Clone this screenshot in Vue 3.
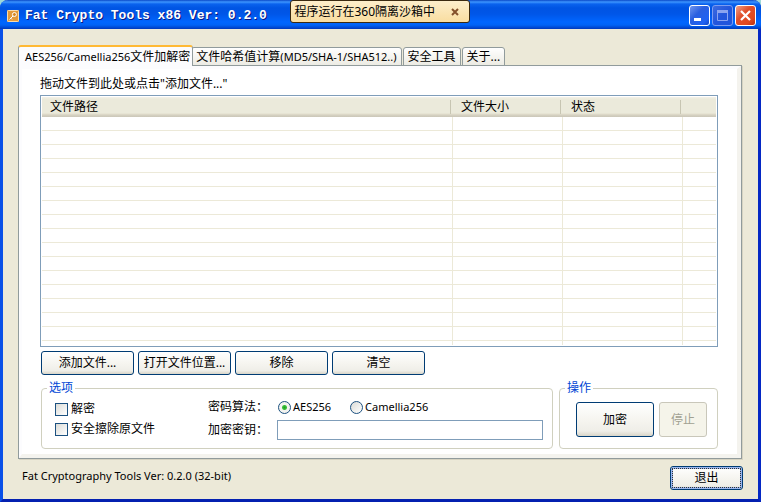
<script setup>
import { ref } from 'vue'

const tabs = [
  { latin: 'AES256/Camellia256', text: '文件加解密' },
  { text: '文件哈希值计算', tail: '(MD5/SHA-1/SHA512..)' },
  { text: '安全工具' },
  { text: '关于...' },
]
const activeTab = ref(0)

const columns = ['文件路径', '文件大小', '状态', '']
const rowCount = 17

const fileActions = ['添加文件...', '打开文件位置...', '移除', '清空']

const decrypt = ref(false)
const wipe = ref(false)
const algorithm = ref('AES256')
const secret = ref('')
const noticeOpen = ref(true)
</script>

<template>
  <div class="window">
    <header class="titlebar">
      <svg class="app-icon" viewBox="0 0 12 12" aria-hidden="true">
        <rect width="12" height="12" rx="1" fill="#e39a3c" />
        <rect x="0.5" y="0.5" width="11" height="11" rx="1" fill="none" stroke="#f9dcae" />
        <circle cx="7.4" cy="4.5" r="2" fill="#d98722" stroke="#fff" />
        <path d="M6 6 L2.5 9.5 M3.8 8.2 L5 9.4" stroke="#fff" fill="none" />
      </svg>
      <h1>Fat Crypto Tools x86 Ver: 0.2.0</h1>
      <div class="window-buttons">
        <button class="win-btn" aria-label="最小化">
          <svg viewBox="0 0 19 19"><rect x="4" y="12" width="7" height="3" fill="#fff" /></svg>
        </button>
        <button class="win-btn dim" aria-label="最大化" disabled>
          <svg viewBox="0 0 19 19">
            <path d="M4.5 4.5h10v10h-10z" fill="none" stroke="#8ba4f0" />
            <path d="M4 4h11v3H4z" fill="#8ba4f0" />
          </svg>
        </button>
        <button class="win-btn close" aria-label="关闭">
          <svg viewBox="0 0 19 19">
            <path d="M5 5 L14 14 M14 5 L5 14" stroke="#fff" stroke-width="2.2" />
          </svg>
        </button>
      </div>
    </header>

    <div v-if="noticeOpen" class="notice">
      <span>程序运行在360隔离沙箱中</span>
      <button aria-label="关闭提示" @click="noticeOpen = false">
        <svg viewBox="0 0 8 8"><path d="M1 1 L7 7 M7 1 L1 7" stroke="#84502a" stroke-width="2" /></svg>
      </button>
    </div>

    <main class="client">
      <nav class="tabs">
        <button
          v-for="(tab, i) in tabs"
          :key="tab.text"
          class="tab"
          :class="{ active: i === activeTab }"
          @click="activeTab = i"
        >
          <small v-if="tab.latin">{{ tab.latin }}</small>{{ tab.text }}<small v-if="tab.tail">{{ tab.tail }}</small>
        </button>
      </nav>

      <section class="panel">
        <div class="panel-inner">
          <p class="hint">拖动文件到此处或点击"添加文件..."</p>

          <div class="file-list">
            <table>
              <colgroup>
                <col />
                <col class="col-size" />
                <col class="col-status" />
                <col class="col-rest" />
              </colgroup>
              <thead>
                <tr>
                  <th v-for="name in columns" :key="name"><span>{{ name }}</span></th>
                </tr>
              </thead>
              <tbody>
                <tr v-for="row in rowCount" :key="row">
                  <td v-for="name in columns" :key="name"></td>
                </tr>
              </tbody>
            </table>
          </div>

          <div class="actions">
            <button v-for="action in fileActions" :key="action" class="btn">{{ action }}</button>
          </div>

          <div class="groups">
            <fieldset class="options">
              <legend>选项</legend>
              <div class="checks">
                <label><input v-model="decrypt" type="checkbox" />解密</label>
                <label><input v-model="wipe" type="checkbox" />安全擦除原文件</label>
              </div>
              <div class="fields">
                <span id="algorithm-label">密码算法：</span>
                <div class="radios" role="radiogroup" aria-labelledby="algorithm-label">
                  <label><input v-model="algorithm" type="radio" name="algorithm" value="AES256" />AES256</label>
                  <label><input v-model="algorithm" type="radio" name="algorithm" value="Camellia256" />Camellia256</label>
                </div>
                <label for="secret">加密密钥：</label>
                <input id="secret" v-model="secret" class="secret" type="text" />
              </div>
            </fieldset>

            <fieldset class="run">
              <legend>操作</legend>
              <button class="btn encrypt">加密</button>
              <button class="btn stop" disabled>停止</button>
            </fieldset>
          </div>
        </div>
      </section>

      <footer class="footer">
        <span>Fat Cryptography Tools Ver: 0.2.0 (32-bit)</span>
        <button class="btn exit">退出</button>
      </footer>
    </main>
  </div>
</template>

<style>
body {
  margin: 0;
  background: #9fd8d8;
}
</style>

<style scoped>
* {
  box-sizing: border-box;
}

.window {
  position: relative;
  min-height: 100vh;
  display: flex;
  flex-direction: column;
  border: 3px solid #0831d9;
  border-color: #0a4be0 #0528c4 #0420b0 #0a50e8;
  border-top: none;
  border-radius: 8px 8px 0 0;
  background: #ece9d8;
  color: #000;
  font: 11px/16px "Noto Sans", "Noto Sans CJK SC", sans-serif;
}

button,
input {
  font: inherit;
  color: inherit;
  margin: 0;
}

.titlebar {
  display: flex;
  align-items: center;
  height: 29px;
  margin: 0 -3px;
  padding: 2px 5px 0 7px;
  border-radius: 8px 8px 0 0;
  background: linear-gradient(#0a48c8 0, #3d95ff 2px, #0a62ee 4px, #0054e3 8px, #0056e8 14px, #0066ff 22px, #0063f6 25px, #0044cc 28px, #0038b8 29px);
}

.app-icon {
  width: 12px;
  height: 12px;
}

h1 {
  flex: 1;
  margin: 0 0 0 6px;
  color: #fff;
  font: bold 13px/16px "Liberation Mono", monospace;
  text-shadow: 1px 1px 0 #0a1883;
}

.window-buttons {
  display: flex;
  gap: 2px;
}

.win-btn {
  width: 21px;
  height: 21px;
  padding: 0;
  border: 1px solid #fff;
  border-radius: 3px;
  background: linear-gradient(135deg, #6f95ee, #2a5fe0 40%, #1f62f4 80%, #1545c0);
}

.win-btn svg {
  display: block;
  width: 19px;
  height: 19px;
}

.win-btn.dim {
  border-color: #7c9cf0;
  background: linear-gradient(135deg, #3d6be0, #2356dc 50%, #1f55dc);
}

.win-btn.close {
  background: linear-gradient(135deg, #f0a088, #e0502c 40%, #e04a20 75%, #b83010);
}

.notice {
  position: absolute;
  top: 0;
  left: 50%;
  width: 180px;
  height: 23px;
  margin-left: -91px;
  padding: 0 10px 0 4px;
  display: flex;
  align-items: center;
  justify-content: space-between;
  border: 1px solid #3b2a10;
  border-radius: 3px;
  background: linear-gradient(#fdeecb, #f9dda0);
  font-size: 12px;
  white-space: nowrap;
}

.notice button {
  padding: 0;
  border: none;
  background: none;
}

.notice svg {
  display: block;
  width: 8px;
  height: 8px;
}

.client {
  flex: 1;
  padding: 16px 16px 9px 15px;
}

.tabs {
  position: relative;
  display: flex;
  align-items: flex-end;
  gap: 1px;
  height: 21px;
  margin-bottom: -1px;
}

.tab {
  height: 19px;
  padding: 0 4px;
  border: 1px solid #919b9c;
  border-radius: 3px 3px 0 0;
  background: linear-gradient(#fff, #f4f3ee 60%, #ecebe4);
  line-height: 17px;
  font-size: 12px;
  white-space: nowrap;
}

.tab small {
  font-size: 11px;
}

.tab.active {
  z-index: 1;
  height: 21px;
  margin-right: -3px;
  padding: 0 2px 0 6px;
  border-top: 2px solid #ffb935;
  border-bottom: none;
  background: #fcfcfe;
}

.panel {
  border: 1px solid #919b9c;
  background: #fcfcfe;
  box-shadow: 1px 1px 0 #d6d3c2;
}

.panel-inner {
  padding: 7px 19px 5px 18px;
  border: 3px solid #fcfcfe;
  border-right: 4px solid #f4f3ee;
  border-bottom: 4px solid #f4f3ee;
  background: #fff;
}

.hint {
  margin: 0 0 3px;
  font-size: 12px;
}

.file-list {
  padding: 1px;
  border: 1px solid #7f9db9;
}

table {
  width: 100%;
  table-layout: fixed;
  border-collapse: separate;
  border-spacing: 0;
}

.col-size {
  width: 110px;
}

.col-status {
  width: 120px;
}

.col-rest {
  width: 33px;
}

th {
  height: 20px;
  padding: 0;
  background: linear-gradient(#f4f2e8 0, #ebeadb 2px, #ebeadb 16px, #e2decd 17px, #d6d2c2 18px, #cbc7b8 20px);
  font-weight: normal;
  font-size: 12px;
  text-align: left;
}

th span {
  display: block;
  height: 14px;
  margin-right: 2px;
  padding-left: 8px;
  border-right: 1px solid #c7c5b2;
  line-height: 14px;
}

th:last-child span {
  border: none;
}

td {
  height: 14px;
  padding: 0;
  border-right: 1px solid #ece9d8;
  border-bottom: 1px solid #ece9d8;
}

td:last-child {
  border-right: none;
}

tr:last-child td {
  height: 4px;
  border-bottom: none;
}

.btn {
  height: 24px;
  padding: 0;
  border: 1px solid #003c74;
  border-radius: 3px;
  background: linear-gradient(#fff, #f6f5f0 50%, #efeee8 85%, #d9d5c8);
  line-height: 20px;
  font-size: 12px;
  white-space: nowrap;
}

.actions {
  display: flex;
  gap: 4px;
  margin: 4px 0 6px 1px;
}

.actions .btn {
  width: 93px;
}

.groups {
  display: flex;
  gap: 6px;
  margin-left: 1px;
}

fieldset {
  display: flex;
  height: 68px;
  min-width: 0;
  margin: 0;
  border: 1px solid #d0d0bf;
  border-radius: 4px;
}

legend {
  margin-left: 5px;
  padding: 0 2px;
  color: #0046d5;
  font-size: 12px;
  line-height: 14px;
}

.options {
  flex: 1;
  padding: 3px 9px 0 0;
}

.checks {
  width: 153px;
  margin-left: 13px;
  font-size: 12px;
}

.checks label {
  display: flex;
  align-items: center;
  gap: 3px;
  height: 20px;
  padding-top: 2px;
}

input[type='checkbox'],
input[type='radio'] {
  appearance: none;
  width: 13px;
  height: 13px;
  border: 1px solid #1c5180;
  background: linear-gradient(135deg, #dcdcd7, #fff);
}

input[type='checkbox']:checked {
  background: #21a121;
}

input[type='radio'] {
  border-radius: 50%;
}

input[type='radio']:checked {
  background: radial-gradient(circle, #21a121 0, #3cbf3c 2px, #f3f3ef 3px);
}

.fields {
  flex: 1;
  display: grid;
  grid-template-columns: 69px 1fr;
  grid-template-rows: 16px 20px;
  row-gap: 5px;
  align-items: center;
  align-content: start;
  padding-top: 1px;
}

.fields > span,
.fields > label {
  font-size: 12px;
}

.radios {
  display: flex;
  gap: 19px;
  padding-left: 1px;
}

.radios label {
  display: flex;
  align-items: center;
  gap: 2px;
}

.secret {
  width: 100%;
  height: 20px;
  padding: 0 3px;
  border: 1px solid #7f9db9;
  background: #fff;
}

.run {
  width: 159px;
  gap: 5px;
  padding: 7px 10px 0 0;
}

.run .btn {
  height: 35px;
}

.encrypt {
  flex: 1;
  margin-left: 16px;
}

.stop {
  width: 48px;
}

.stop:disabled {
  border-color: #c9c7ba;
  background: #f5f4ea;
  color: #a1a192;
}

.footer {
  display: flex;
  justify-content: space-between;
  margin-top: 7px;
  padding-left: 4px;
}

.footer span {
  line-height: 20px;
}

.exit {
  width: 73px;
  margin-right: -1px;
  box-shadow: inset 0 0 0 2px #9ab6ee;
  outline: 1px dotted #333;
  outline-offset: -3px;
}
</style>
